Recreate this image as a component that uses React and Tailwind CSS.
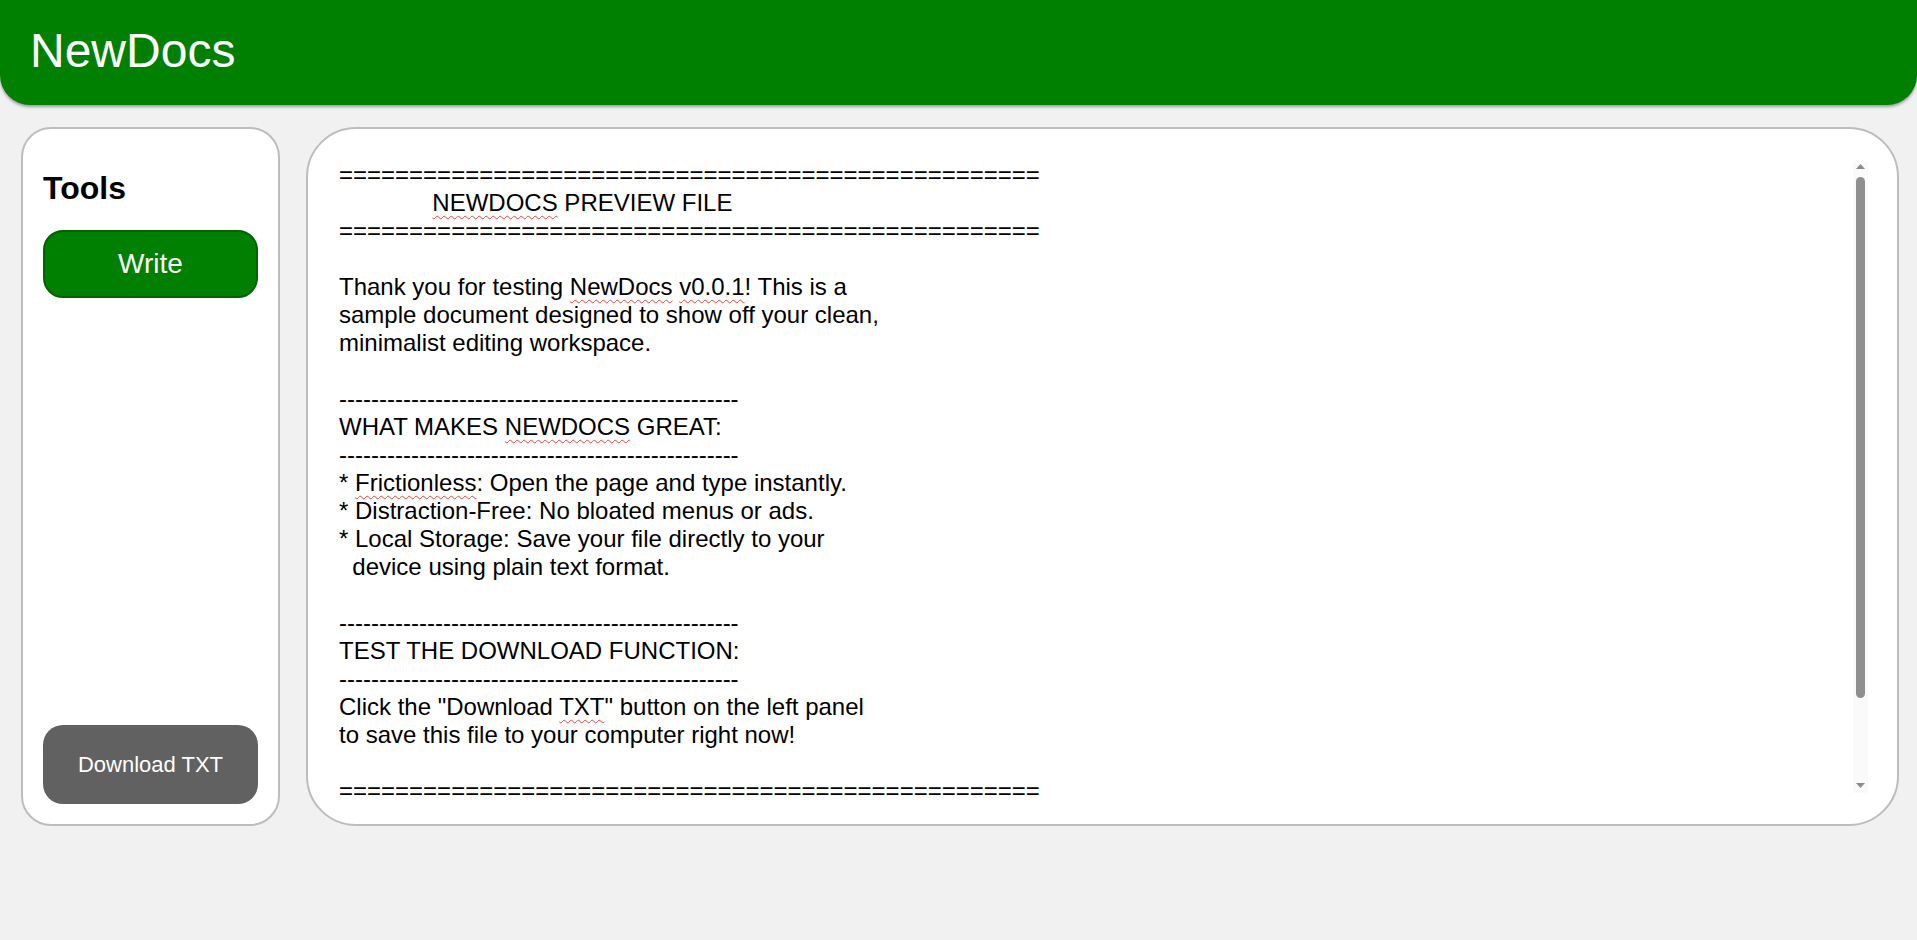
import React from "react";

const eq = "=".repeat(50);
const dash = "-".repeat(50);

// each line of the preview document; objects are words flagged by the spell checker
const lines = [
  [eq],
  [" ".repeat(14), { w: "NEWDOCS" }, " PREVIEW FILE"],
  [eq],
  [""],
  ["Thank you for testing ", { w: "NewDocs" }, " ", { w: "v0.0.1" }, "! This is a"],
  ["sample document designed to show off your clean,"],
  ["minimalist editing workspace."],
  [""],
  [dash],
  ["WHAT MAKES ", { w: "NEWDOCS" }, " GREAT:"],
  [dash],
  ["* ", { w: "Frictionless" }, ": Open the page and type instantly."],
  ["* Distraction-Free: No bloated menus or ads."],
  ["* Local Storage: Save your file directly to your"],
  ["  device using plain text format."],
  [""],
  [dash],
  ["TEST THE DOWNLOAD FUNCTION:"],
  [dash],
  ['Click the "Download ', { w: "TXT" }, '" button on the left panel'],
  ["to save this file to your computer right now!"],
  [""],
  [eq],
];

const Arrow = ({ down }) => (
  <svg width="9" height="5" viewBox="0 0 9 5" className={down ? "rotate-180" : ""}>
    <path d="M4.5 0 L9 5 L0 5 Z" fill="#8a8a8a" />
  </svg>
);

const App = () => {
  return (
    <div className="min-h-screen bg-[#f1f1f1] font-['Liberation_Sans',Arial,sans-serif] text-black">
      <header className="h-[105px] bg-[#008000] rounded-b-[30px] shadow-[0_2px_3px_rgba(0,0,0,0.35)] flex items-center px-[30px] pb-[4px]">
        <h1 className="text-[48px] text-white font-normal leading-none">NewDocs</h1>
      </header>

      <main className="flex gap-[26px] pl-[21px] pr-[18px] pt-[22px]">
        <aside className="w-[259px] h-[699px] shrink-0 bg-white border-2 border-[#bdbdbd] rounded-[30px] flex flex-col px-[20px] pt-[41px] pb-[20px]">
          <h2 className="text-[32px] font-bold leading-[36px]">Tools</h2>
          <button className="mt-[24px] h-[68px] w-full bg-[#008000] border-2 border-[#006400] rounded-[20px] text-white text-[28px]">
            Write
          </button>
          <button className="mt-auto h-[79px] w-full bg-[#616161] rounded-[20px] text-white text-[22px]">
            Download TXT
          </button>
        </aside>

        <section className="flex-1 h-[699px] bg-white border-2 border-[#bdbdbd] rounded-[50px] flex pl-[31px] pr-[29px] pt-[32px]">
          <div className="flex-1 h-[645px] overflow-hidden text-[24px]">
            {lines.map((parts, i) => (
              <div key={i} className="h-[28px] leading-[28px] whitespace-pre">
                {parts.map((p, j) =>
                  typeof p === "string" ? (
                    <span key={j}>{p || "\u00a0"}</span>
                  ) : (
                    <span
                      key={j}
                      className="underline decoration-wavy decoration-[#f04040] decoration-1 underline-offset-[4px]"
                    >
                      {p.w}
                    </span>
                  )
                )}
              </div>
            ))}
          </div>
          <div className="w-[15px] h-[632px] flex flex-col items-center pt-[3px] pb-[5px] bg-[#fafafa]">
            <Arrow />
            <div className="mt-[8px] h-[521px] w-[9px] rounded-full bg-[#8f8f8f]" />
            <div className="flex-1" />
            <Arrow down />
          </div>
        </section>
      </main>
    </div>
  );
};

export default App;
